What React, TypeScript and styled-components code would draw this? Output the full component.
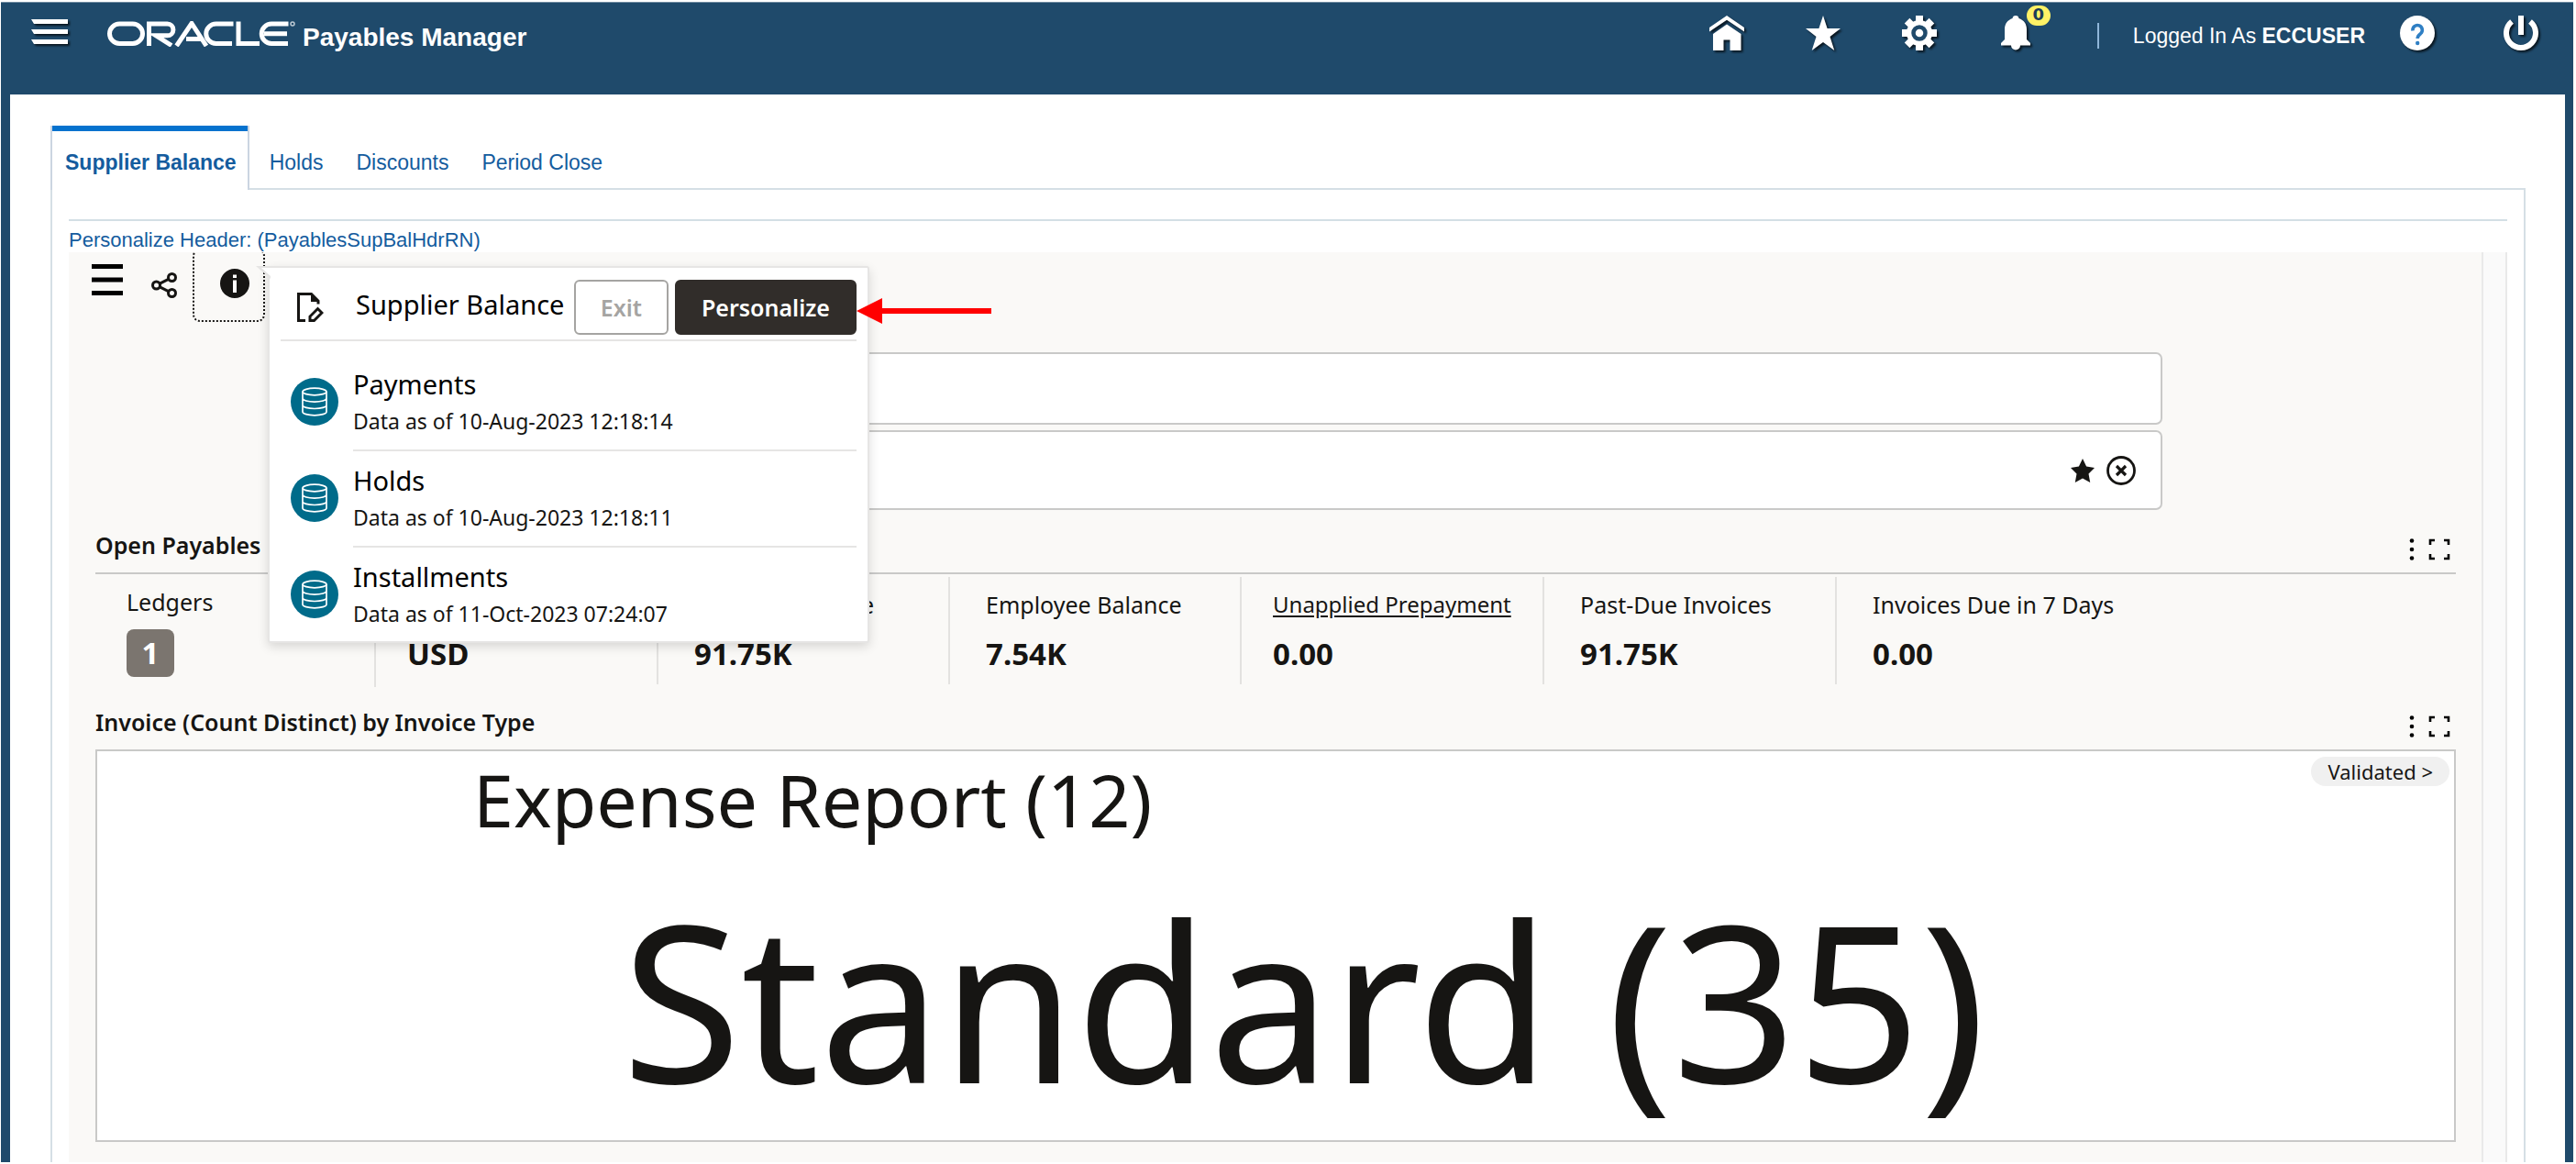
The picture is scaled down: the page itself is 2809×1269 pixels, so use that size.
import React from "react";
import styled, { createGlobalStyle } from "styled-components";

const sans = `"Liberation Sans", Arial, Helvetica, sans-serif`;
const humanist = `"Noto Sans", "Open Sans", sans-serif`;
const navy = "#1f4a6b";
const ink = "#161513";

const GlobalStyle = createGlobalStyle`
  *, *::before, *::after { box-sizing: border-box; }
  body { margin: 0; background: #fff; font-family: ${sans}; color: ${ink}; }
  button, input { font: inherit; color: inherit; }
  svg { display: block; }
`;

const Shell = styled.div`
  display: flex;
  flex-direction: column;
  min-height: 100vh;
  border: solid #fff;
  border-width: 2px 3px 2px 1px;
  background: ${navy};
`;

/* ---------- Top bar ---------- */

const TopBar = styled.header`
  display: flex;
  align-items: flex-start;
  height: 101px;
  padding: 14px 38px 0 33px;
  color: #fff;
  border-top: 1px solid #6f8ba1;
`;

const IconButton = styled.button`
  display: flex;
  position: relative;
  padding: 0;
  border: 0;
  background: none;
  cursor: pointer;
`;

const TopIcon = styled(IconButton)`
  flex: none;
  filter: drop-shadow(2px 2px 1px rgba(0, 0, 0, 0.7));
`;

const Brand = styled.div`
  display: flex;
  margin: 6px 0 0 41px;
  gap: 7px;
`;

const AppName = styled.h1`
  margin: 0;
  font-size: 28px;
  line-height: 36px;
  font-weight: 700;
`;

const Shortcuts = styled.nav`
  display: flex;
  gap: 67px;
  margin-left: auto;
`;

const BellSlot = styled.div`
  position: relative;
`;

const Count = styled.span`
  position: absolute;
  top: -11px;
  left: 31px;
  width: 26px;
  height: 22px;
  border-radius: 11px;
  background: #fff266;
  color: #1c3c58;
  font: 700 18px/20px "DejaVu Sans", sans-serif;
  text-align: center;
`;

const UserInfo = styled.p`
  margin: 8px 38px 0 70px;
  padding-left: 37px;
  border-left: 2px solid #8fb6d9;
  font-size: 23px;
  line-height: 28px;
`;

const Session = styled.div`
  display: flex;
  gap: 75px;
`;

/* ---------- Tabs and page frame ---------- */

const Main = styled.main`
  flex: 1;
  display: flex;
  flex-direction: column;
  margin: 0 9px 0 10px;
  padding: 34px 43px 0 44px;
  background: #fff;
`;

const Tabs = styled.nav`
  display: flex;
`;

const Tab = styled.a<{ $active?: boolean }>`
  position: relative;
  height: 70px;
  margin: ${(p) => (p.$active ? "0 4px -2px 0" : "0 0 -2px")};
  padding: ${(p) => (p.$active ? "26px 12px 0 14px" : "26px 18px 0")};
  border: solid ${(p) => (p.$active ? "#cbd5e1" : "transparent")};
  border-width: ${(p) => (p.$active ? "0 2px" : "0")};
  background: ${(p) => (p.$active ? "#fff" : "none")};
  ${(p) => p.$active && "box-shadow: inset 0 6px #0572ce;"}
  color: #145c9e;
  font-size: 23px;
  line-height: 28px;
  font-weight: ${(p) => (p.$active ? 700 : 400)};
  text-decoration: none;
`;

const Panel = styled.section`
  flex: 1;
  display: flex;
  flex-direction: column;
  padding: 32px 18px 0;
  border: solid #d5dfe5;
  border-width: 2px 2px 0;
`;

const HeaderLink = styled.a`
  padding-top: 7px;
  height: 36px;
  border-top: 2px solid #d3dfe5;
  color: #145c9e;
  font-size: 22px;
  line-height: 28px;
  text-decoration: none;
`;

const Board = styled.div`
  position: relative;
  flex: 1;
  display: flex;
  font-family: ${humanist};
`;

const BoardBody = styled.div`
  flex: 1;
  min-width: 0;
  padding-bottom: 20px;
  background: #faf9f7;
`;

const Gutter = styled.div`
  width: 28px;
  border: solid #e9e9e9;
  border-width: 0 2px;
  background: #fafafa;
`;

/* ---------- Toolbar and search ---------- */

const Toolbar = styled.div`
  display: flex;
  align-items: flex-start;
  height: 109px;
  padding-left: 25px;
  overflow: hidden;
`;

const MenuButton = styled(IconButton)`
  margin: 13px 31px 0 0;
`;

const ShareButton = styled(IconButton)`
  margin: 22px 17px 0 0;
`;

const InfoButton = styled(IconButton)`
  justify-content: center;
  width: 79px;
  height: 80px;
  margin-top: -4px;
  padding: 20px 0 0 12px;
  border: 2px dotted ${ink};
  border-radius: 8px;
`;

const Filters = styled.div`
  display: flex;
  flex-direction: column;
  gap: 6px;
  margin: 0 348px;
`;

const SearchBox = styled.input`
  height: 79px;
  padding: 0 24px;
  border: 2px solid #c9c9c8;
  border-radius: 7px;
  background: #fff;
  font-size: 25px;
`;

const Refinements = styled.div`
  display: flex;
  align-items: center;
  justify-content: flex-end;
  gap: 13px;
  height: 87px;
  padding-right: 27px;
  border: 2px solid #c9c9c8;
  border-radius: 7px;
  background: #fff;
`;

/* ---------- Dashboard sections ---------- */

const Section = styled.section`
  margin: 0 28px 0 29px;
`;

const SectionHead = styled.div<{ $top?: boolean }>`
  display: flex;
  align-items: center;
  justify-content: space-between;
  height: 50px;
  margin-top: ${(p) => (p.$top ? "18px" : "0")};
  padding-right: 6px;
`;

const SectionTitle = styled.h2`
  margin: 0;
  padding-bottom: 10px;
  font-size: 25px;
  line-height: 34px;
  font-weight: 600;
`;

const SectionTools = styled.div`
  display: flex;
  gap: 15px;
`;

const Metrics = styled.div`
  display: flex;
  height: 143px;
  padding-top: 3px;
  border-top: 2px solid #c9c9c8;
`;

const Metric = styled.div<{ $width: number; $indent: number }>`
  width: ${(p) => p.$width}px;
  height: 117px;
  padding: 13px 0 0 ${(p) => p.$indent}px;
  border-right: 2px solid #e3e2e0;
  white-space: nowrap;
  &:last-child { border-right: 0; }
`;

const MetricLabel = styled.div`
  min-height: 34px;
  font-size: 25px;
  line-height: 34px;
`;

const MetricLink = styled.a`
  display: block;
  color: inherit;
  font-size: 24px;
  line-height: 34px;
  text-underline-offset: 3px;
`;

const MetricValue = styled.div`
  margin-top: 15px;
  font-size: 33px;
  line-height: 44px;
  font-weight: 700;
`;

const LedgerMetric = styled(Metric)`
  height: 120px;
  padding-top: 10px;
`;

const LedgerCount = styled.button`
  display: block;
  width: 52px;
  height: 52px;
  margin-top: 13px;
  padding: 0;
  border: 0;
  border-radius: 8px;
  background: #7b756f;
  color: #fff;
  font-size: 33px;
  line-height: 52px;
  font-weight: 700;
`;

const Cloud = styled.div`
  position: relative;
  height: 428px;
  border: 2px solid #c9c9c8;
  background: #fff;
  white-space: nowrap;
`;

const Word = styled.div<{ $size: number; $line: number; $indent: number }>`
  padding-left: ${(p) => p.$indent}px;
  font-size: ${(p) => p.$size}px;
  line-height: ${(p) => p.$line}px;
`;

const Pill = styled.button`
  position: absolute;
  top: 6px;
  right: 5px;
  height: 32px;
  padding: 0 18px;
  border: 0;
  border-radius: 16px;
  background: #f0f0f0;
  font-size: 22px;
  line-height: 32px;
`;

/* ---------- Data sources popup ---------- */

const Popup = styled.div`
  position: absolute;
  top: 15px;
  left: 217px;
  width: 656px;
  height: 411px;
  padding: 13px 12px 0 14px;
  border: 2px solid #e6e5e4;
  border-radius: 3px;
  background: #fff;
  box-shadow: 0 4px 12px rgba(0, 0, 0, 0.14);
  color: #000;
`;

const PopupTip = styled.svg`
  position: absolute;
  top: -2px;
  left: -15px;
`;

const PopupHead = styled.div`
  display: flex;
  align-items: center;
  height: 67px;
  margin-left: -2px;
  padding: 0 0 6px 17px;
  border-bottom: 2px solid #e6e5e4;
`;

const PopupTitle = styled.h3`
  flex: 1;
  margin: 0 0 5px 35px;
  font-size: 29px;
  line-height: 40px;
  font-weight: 400;
`;

const Action = styled.button<{ $primary?: boolean }>`
  height: 60px;
  margin-left: 7px;
  padding: 0 27px;
  border: 2px solid ${(p) => (p.$primary ? "#312d2a" : "#a5a4a2")};
  border-radius: 6px;
  background: ${(p) => (p.$primary ? "#312d2a" : "#fff")};
  color: ${(p) => (p.$primary ? "#fff" : "#a5a4a2")};
  font-size: 25px;
  font-weight: 600;
`;

const Sources = styled.ul`
  margin: 15px 0 0;
  padding: 0 0 0 9px;
  list-style: none;
`;

const Source = styled.li`
  display: flex;
  gap: 16px;
  height: 105px;
`;

const SourceIcon = styled.div`
  display: flex;
  align-items: center;
  justify-content: center;
  flex: none;
  width: 52px;
  height: 52px;
  margin-top: 25px;
  border-radius: 50%;
  background: #006b8a;
`;

const SourceText = styled.div`
  flex: 1;
  padding-top: 12px;
  border-bottom: 2px solid #e6e5e4;
  ${Source}:last-child & { border-bottom: 0; }
`;

const SourceName = styled.div`
  font-size: 29px;
  line-height: 40px;
`;

const SourceDate = styled.div`
  color: ${ink};
  font-size: 23px;
  line-height: 40px;
`;

const Pointer = styled.svg`
  position: absolute;
  top: 50px;
  left: 859px;
`;

/* ---------- Drawings ---------- */

const OracleMark = () => (
  <svg width="206" height="28" viewBox="0 0 206 28" role="img" aria-label="Oracle" fill="none" stroke="#fff" strokeWidth="5">
    <rect x="2.5" y="3" width="36" height="21.5" rx="10.75" />
    <path d="M45.5 27V3H65.5a6.4 6.4 0 0 1 0 12.8H53L70 26.5" />
    <path d="M75.5 27L92 2.5L108 27M86 19.5H103" />
    <path d="M137.5 3H118.5a10.75 10.75 0 0 0 0 21.5H136" />
    <path d="M143 .5V24.5H166" />
    <path d="M197.5 3H179a10.75 10.75 0 0 0 0 21.5H197M171 13.75H196" />
    <circle cx="202" cy="3" r="2" strokeWidth="1.5" opacity=".7" />
  </svg>
);

const MenuBars = () => (
  <svg width="42" height="36" viewBox="0 0 42 36" fill="#fff">
    <path d="M0 4h40v5H3zM0 15h40v5H3zM0 26h40v5H3z" />
  </svg>
);

const HomeIcon = () => (
  <svg width="38" height="38" viewBox="0 0 38 38" fill="#fff">
    <path d="M19 0L38 13v4.5L19 4.8 0 17.5V13z" />
    <path d="M19 9.5L34.5 20v18H22.5V26.5h-7V38H4V20z" />
  </svg>
);

const StarIcon = ({ size, color, points }: { size: number; color: string; points: string }) => (
  <svg width={size} height={size} viewBox="0 0 38 38" fill={color}>
    <polygon points={points} />
  </svg>
);

const sharpStar = "19,0 23.6,14 38,14 26.5,23 31.3,38 19,29 6.7,38 11.5,23 0,14 14.4,14";
const fullStar = "19,0 25,12.5 38,14.5 28.5,24 31,38 19,31.5 7,38 9.5,24 0,14.5 13,12.5";

const GearIcon = () => (
  <svg width="38" height="38" viewBox="0 0 38 38">
    <g fill="#fff">
      {[0, 45, 90, 135].map((a) => (
        <rect key={a} x="15" y="0" width="8" height="38" transform={`rotate(${a} 19 19)`} />
      ))}
      <circle cx="19" cy="19" r="14" />
    </g>
    <circle cx="19" cy="19" r="6.5" fill="#fff" stroke={navy} strokeWidth="4.5" />
  </svg>
);

const BellIcon = () => (
  <svg width="38" height="38" viewBox="0 0 38 38" fill="#fff">
    <path d="M19 0a3.5 3.5 0 0 1 3.5 3C28 5 31 9 31 15v11l4 4v2.5H24a5 5 0 0 1-10 0H3V30l4-4V15C7 9 10 5 15.5 3A3.5 3.5 0 0 1 19 0z" />
  </svg>
);

const HelpIcon = () => (
  <svg width="38" height="38" viewBox="0 0 38 38" fill="none">
    <circle cx="19" cy="19" r="19" fill="#fff" />
    <path d="M14 16.5a5.2 5.2 0 1 1 8.5 3.2c-2 1.5-3.3 2.3-3.3 5.3" stroke="#2f7fc4" strokeWidth="3.6" />
    <circle cx="19.2" cy="30" r="2.2" fill="#2f7fc4" />
  </svg>
);

const PowerIcon = () => (
  <svg width="38" height="38" viewBox="0 0 38 38" fill="none" stroke="#fff" strokeWidth="6">
    <path d="M9 6.5a16 16 0 1 0 20 0" />
    <path d="M19 0v21" />
  </svg>
);

const ListIcon = () => (
  <svg width="34" height="34" viewBox="0 0 34 34" fill="#000">
    <path d="M0 0h34v5H0zM0 14.5h34v5H0zM0 29h34v5H0z" />
  </svg>
);

const ShareIcon = () => (
  <svg width="28" height="28" viewBox="0 0 28 28" fill="none" stroke={ink} strokeWidth="3">
    <circle cx="5.5" cy="14" r="4" />
    <circle cx="22.5" cy="5.5" r="4" />
    <circle cx="22.5" cy="22.5" r="4" />
    <path d="M9.3 12.2L18.7 7.4M9.3 15.8L18.7 20.6" />
  </svg>
);

const InfoIcon = () => (
  <svg width="32" height="32" viewBox="0 0 32 32">
    <circle cx="16" cy="16" r="16" fill={ink} />
    <path d="M14 6.5h4v3.5h-4zM14 12.5h4V26h-4z" fill="#fff" />
  </svg>
);

const ClearIcon = () => (
  <svg width="32" height="32" viewBox="0 0 32 32" fill="none" stroke={ink} strokeWidth="2.8">
    <circle cx="16" cy="16" r="14.5" />
    <path d="M11 11l10 10M21 11L11 21" strokeWidth="3.2" />
  </svg>
);

const DotsIcon = () => (
  <svg width="6" height="24" viewBox="0 0 6 24" fill="#000">
    <circle cx="3" cy="2.5" r="2.3" />
    <circle cx="3" cy="12" r="2.3" />
    <circle cx="3" cy="21.5" r="2.3" />
  </svg>
);

const ExpandIcon = () => (
  <svg width="24" height="24" viewBox="0 0 24 24" fill="none" stroke="#000" strokeWidth="2.6">
    <path d="M2 7V2h5M17 2h5v5M22 17v5h-5M7 22H2v-5" />
  </svg>
);

const EditPageIcon = () => (
  <svg width="30" height="34" viewBox="0 0 30 34" fill="none" stroke={ink} strokeWidth="3">
    <path d="M10 31.5H2.5V2.5h14L24 10v3.5" />
    <path d="M16 2v9h9z" fill={ink} stroke="none" />
    <path d="M15 31.5v-4.5l8.5-8.5 4.5 4.5-8.5 8.5z" />
  </svg>
);

const DatabaseIcon = () => (
  <svg width="28" height="32" viewBox="0 0 28 32" fill="none" stroke="#fff" strokeWidth="1.7">
    <ellipse cx="14" cy="5" rx="13" ry="3.8" />
    <path d="M1 5v22c0 2.1 5.8 3.8 13 3.8s13-1.7 13-3.8V5M1 12.3c0 2.1 5.8 3.8 13 3.8s13-1.7 13-3.8M1 19.7c0 2.1 5.8 3.8 13 3.8s13-1.7 13-3.8" />
  </svg>
);

/* ---------- Content ---------- */

const sources = [
  { name: "Payments", date: "Data as of 10-Aug-2023 12:18:14" },
  { name: "Holds", date: "Data as of 10-Aug-2023 12:18:11" },
  { name: "Installments", date: "Data as of 11-Oct-2023 07:24:07" },
];

const metrics = [
  { label: "", value: "USD", width: 308, indent: 34 },
  { label: "Supplier Balance", value: "91.75K", width: 318, indent: 39 },
  { label: "Employee Balance", value: "7.54K", width: 318, indent: 39 },
  { label: "Unapplied Prepayment", value: "0.00", width: 330, indent: 34, link: true },
  { label: "Past-Due Invoices", value: "91.75K", width: 319, indent: 39 },
  { label: "Invoices Due in 7 Days", value: "0.00", width: 340, indent: 39 },
];

const Tools = () => (
  <SectionTools>
    <IconButton aria-label="Options"><DotsIcon /></IconButton>
    <IconButton aria-label="Maximize"><ExpandIcon /></IconButton>
  </SectionTools>
);

export default function App() {
  return (
    <>
      <GlobalStyle />
      <Shell>
        <TopBar>
          <TopIcon aria-label="Navigator"><MenuBars /></TopIcon>
          <Brand>
            <OracleMark />
            <AppName>Payables Manager</AppName>
          </Brand>
          <Shortcuts>
            <TopIcon aria-label="Home"><HomeIcon /></TopIcon>
            <TopIcon aria-label="Favorites"><StarIcon size={38} color="#fff" points={sharpStar} /></TopIcon>
            <TopIcon aria-label="Settings"><GearIcon /></TopIcon>
            <BellSlot>
              <TopIcon aria-label="Notifications"><BellIcon /></TopIcon>
              <Count>0</Count>
            </BellSlot>
          </Shortcuts>
          <UserInfo>Logged In As <b>ECCUSER</b></UserInfo>
          <Session>
            <TopIcon aria-label="Help"><HelpIcon /></TopIcon>
            <TopIcon aria-label="Logout"><PowerIcon /></TopIcon>
          </Session>
        </TopBar>

        <Main>
          <Tabs>
            <Tab href="#balance" $active>Supplier Balance</Tab>
            <Tab href="#holds">Holds</Tab>
            <Tab href="#discounts">Discounts</Tab>
            <Tab href="#close">Period Close</Tab>
          </Tabs>
          <Panel>
            <HeaderLink href="#personalize">Personalize Header: (PayablesSupBalHdrRN)</HeaderLink>
            <Board>
              <BoardBody>
                <Toolbar>
                  <MenuButton aria-label="Menu"><ListIcon /></MenuButton>
                  <ShareButton aria-label="Share"><ShareIcon /></ShareButton>
                  <InfoButton aria-label="Information"><InfoIcon /></InfoButton>
                </Toolbar>
                <Filters>
                  <SearchBox type="text" aria-label="Search" />
                  <Refinements>
                    <IconButton aria-label="Save search"><StarIcon size={26} color={ink} points={fullStar} /></IconButton>
                    <IconButton aria-label="Clear"><ClearIcon /></IconButton>
                  </Refinements>
                </Filters>

                <Section>
                  <SectionHead $top>
                    <SectionTitle>Open Payables</SectionTitle>
                    <Tools />
                  </SectionHead>
                  <Metrics>
                    <LedgerMetric $width={306} $indent={34}>
                      <MetricLabel>Ledgers</MetricLabel>
                      <LedgerCount>1</LedgerCount>
                    </LedgerMetric>
                    {metrics.map((m, i) => (
                      <Metric key={i} $width={m.width} $indent={m.indent}>
                        {m.link ? <MetricLink href="#prepayment">{m.label}</MetricLink> : <MetricLabel>{m.label}</MetricLabel>}
                        <MetricValue>{m.value}</MetricValue>
                      </Metric>
                    ))}
                  </Metrics>
                </Section>

                <Section>
                  <SectionHead>
                    <SectionTitle>Invoice (Count Distinct) by Invoice Type</SectionTitle>
                    <Tools />
                  </SectionHead>
                  <Cloud>
                    <Word $size={79} $line={106} $indent={410}>Expense Report (12)</Word>
                    <Word $size={237} $line={328} $indent={572}>Standard (35)</Word>
                    <Pill>Validated &gt;</Pill>
                  </Cloud>
                </Section>
              </BoardBody>
              <Gutter />

              <Popup>
                <PopupTip width="16" height="14" viewBox="0 0 16 14">
                  <path d="M0 0H16V14z" fill="#e6e5e4" />
                  <path d="M6 2H16V11z" fill="#fff" />
                </PopupTip>
                <PopupHead>
                  <EditPageIcon />
                  <PopupTitle>Supplier Balance</PopupTitle>
                  <Action disabled>Exit</Action>
                  <Action $primary>Personalize</Action>
                </PopupHead>
                <Sources>
                  {sources.map((s) => (
                    <Source key={s.name}>
                      <SourceIcon><DatabaseIcon /></SourceIcon>
                      <SourceText>
                        <SourceName>{s.name}</SourceName>
                        <SourceDate>{s.date}</SourceDate>
                      </SourceText>
                    </Source>
                  ))}
                </Sources>
              </Popup>
              <Pointer width="147" height="28" viewBox="0 0 147 28" fill="#f00">
                <path d="M0 14L28 0v11h119v6H28v11z" />
              </Pointer>
            </Board>
          </Panel>
        </Main>
      </Shell>
    </>
  );
}
